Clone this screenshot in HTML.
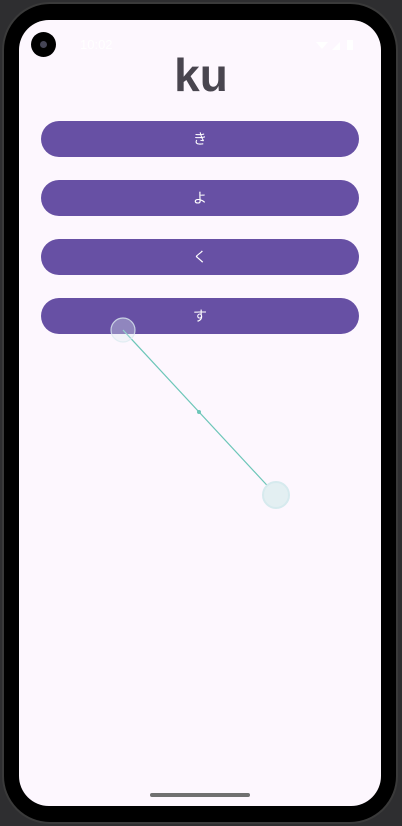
<!DOCTYPE html>
<html><head><style>
*{margin:0;padding:0;box-sizing:border-box}
body{width:402px;height:826px;background:#2e2e30;position:relative;overflow:hidden;font-family:"Liberation Sans","Noto Sans CJK JP",sans-serif}
.frame{position:absolute;left:2px;top:2px;width:396px;height:822px;border-radius:48px;background:#000;border:2px solid #3a3a3a}
.screen{position:absolute;left:19px;top:20px;width:362px;height:786px;border-radius:30px;background:#fdf7fe;overflow:hidden}
.cam{position:absolute;left:31px;top:32px;width:25px;height:25px;border-radius:50%;background:#000}
.cam:after{content:"";position:absolute;left:9px;top:9px;width:7px;height:7px;border-radius:50%;background:#445}
.title{position:absolute;left:0;width:402px;top:50px;text-align:center;font-size:46px;font-weight:bold;color:#49454f;line-height:50px}
.btn{position:absolute;left:41px;width:318px;height:36px;border-radius:18px;background:#6750a4;color:#fff;font-size:14px;text-align:center;line-height:36px}
.bar{position:absolute;left:150px;top:793px;width:100px;height:4px;border-radius:2px;background:#707070}
.status{position:absolute;top:37px;font-size:13px;color:#fff}
</style></head><body>
<div class="frame"></div>
<div class="screen"></div>
<div class="cam"></div>
<div class="status" style="left:80px">10:02</div>
<svg style="position:absolute;left:0;top:0" width="402" height="826">
<path d="M316 42 L328 42 L322 49 Z" fill="#fff"/>
<path d="M332 50 L340 42 L340 50 Z" fill="#fff"/>
<rect x="347" y="40" width="6" height="10" fill="#fff"/>
</svg>
<div class="title">ku</div>
<div class="btn" style="top:121px">き</div>
<div class="btn" style="top:180px">よ</div>
<div class="btn" style="top:239px">く</div>
<div class="btn" style="top:298px">す</div>
<svg style="position:absolute;left:0;top:0" width="402" height="826">
<line x1="123" y1="330" x2="276" y2="495" stroke="#6cc6b8" stroke-width="1.2"/>
<circle cx="199" cy="412" r="2" fill="#6cc6b8"/>
<circle cx="123" cy="330" r="12" fill="rgba(220,235,240,0.35)" stroke="rgba(220,235,240,0.8)" stroke-width="1.2"/>
<circle cx="276" cy="495" r="13" fill="#e3eff2" stroke="#d6eaee" stroke-width="2"/>
</svg>
<div class="bar"></div>
</body></html>
